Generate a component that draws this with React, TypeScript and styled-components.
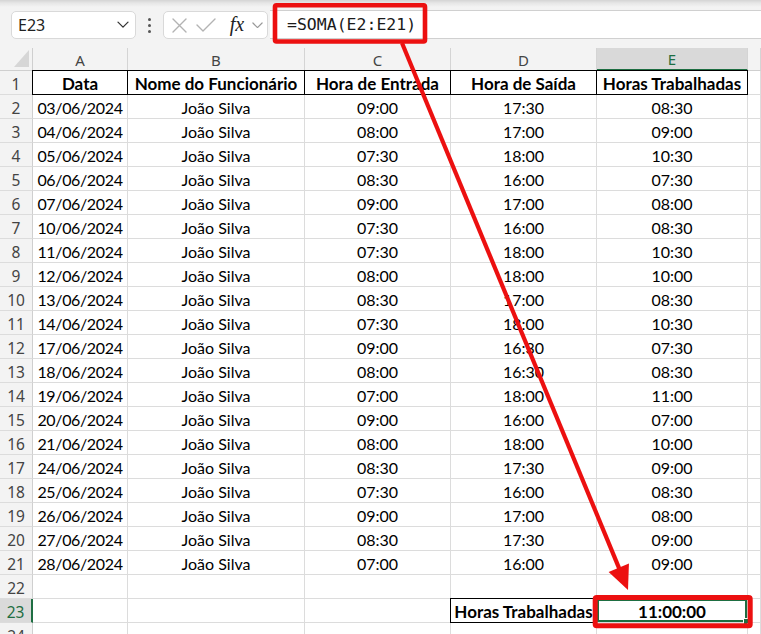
import React from "react";
import styled, { createGlobalStyle, css } from "styled-components";

const GlobalStyle = createGlobalStyle`
  html, body { margin: 0; padding: 0; background: #f3f3f3; overflow: hidden; }
  #root { width: 761px; height: 634px; }
`;

const GREEN = "#1e6e42";
const GRID = "#dcdcdc";
const RED = "#ec1010";

const Page = styled.div`
  position: relative;
  width: 761px;
  height: 634px;
  overflow: hidden;
  background: #f3f3f3;
`;

const Toolbar = styled.div`
  display: flex;
  align-items: flex-start;
  height: 48px;
  box-sizing: border-box;
  padding: 10px 0 0 11px;
  background: linear-gradient(#d4d4d4 0, #e6e6e6 3px, #f3f3f3 7px);
`;

const NameBox = styled.div`
  margin-top: 1px;
  width: 125px;
  height: 28px;
  box-sizing: border-box;
  display: flex;
  align-items: center;
  justify-content: space-between;
  padding: 0 6px 0 6px;
  background: #fff;
  border: 1px solid #d9d9d9;
  border-radius: 5px;
  font: 16px "Noto Sans", sans-serif;
  color: #222;
`;

const Dots = styled.div`
  width: 27px;
  height: 28px;
  margin-top: 1px;
  display: flex;
  flex-direction: column;
  align-items: center;
  justify-content: center;
  gap: 3px;
  & > span {
    width: 3px;
    height: 3px;
    border-radius: 50%;
    background: #555;
  }
`;

const FxBox = styled.div`
  margin-top: 1px;
  width: 105px;
  height: 28px;
  box-sizing: border-box;
  display: flex;
  align-items: center;
  padding-left: 6px;
  background: #fff;
  border: 1px solid #d9d9d9;
  border-radius: 5px;
`;

const IconSlot = styled.div<{ $w: number }>`
  width: ${(p) => p.$w}px;
  display: flex;
  align-items: center;
  justify-content: center;
`;

const FxText = styled.span`
  font: italic 20px "Liberation Serif", serif;
  color: #222;
  width: 26px;
  text-align: center;
  margin-top: -2px;
`;

const FormulaInput = styled.div`
  flex: 1;
  height: 29px;
  margin-left: 2px;
  box-sizing: border-box;
  display: flex;
  align-items: center;
  padding-left: 17px;
  background: #fff;
  border-top: 1px solid #d0d0d0;
  border-bottom: 1px solid #d0d0d0;
  font: 16.5px "DejaVu Sans Mono", monospace;
  color: #1a1a1a;
`;

const Sheet = styled.div`
  display: grid;
  grid-template-columns: 33px 95px 177px 146px 146px 151px 13px;
  grid-template-rows: 23px;
  grid-auto-rows: 24px;
  background: #fff;
`;

const Corner = styled.div`
  background: #f3f3f3;
  border-right: 1px solid #cfcfcf;
  border-bottom: 1px solid #cfcfcf;
  display: flex;
  align-items: flex-end;
  justify-content: flex-end;
  padding: 0 3px 3px 0;
  box-sizing: border-box;
`;

const ColHeader = styled.div<{ $selected?: boolean }>`
  box-sizing: border-box;
  background: ${(p) => (p.$selected ? "#d9d9d9" : "#f3f3f3")};
  border-right: 1px solid #d4d4d4;
  border-bottom: ${(p) => (p.$selected ? `2px solid ${GREEN}` : "1px solid #cfcfcf")};
  display: flex;
  align-items: center;
  justify-content: center;
  padding-top: 1px;
  font: 15px "Noto Sans", sans-serif;
  color: ${(p) => (p.$selected ? GREEN : "#444")};
`;

const RowHeader = styled.div<{ $selected?: boolean }>`
  box-sizing: border-box;
  background: ${(p) => (p.$selected ? "#dadada" : "#f3f3f3")};
  border-right: ${(p) => (p.$selected ? `2px solid ${GREEN}` : "1px solid #cfcfcf")};
  border-bottom: 1px solid #dcdcdc;
  display: flex;
  align-items: center;
  justify-content: center;
  padding-top: 2px;
  font: 15.5px "Noto Sans", sans-serif;
  color: ${(p) => (p.$selected ? GREEN : "#444")};
`;

const Cell = styled.div<{ $bold?: boolean; $boxed?: boolean; $active?: boolean; $tight?: boolean }>`
  position: relative;
  box-sizing: border-box;
  border-right: 1px solid ${GRID};
  border-bottom: 1px solid ${GRID};
  display: flex;
  align-items: center;
  justify-content: center;
  padding-top: 1px;
  white-space: nowrap;
  font: ${(p) => (p.$bold ? "700 17px" : "400 16px")} "Lato", sans-serif;
  letter-spacing: ${(p) => (p.$tight ? "-0.35px" : "0")};
  color: #000;
  ${(p) =>
    p.$boxed &&
    css`
      border-right-color: #000;
      border-bottom-color: #000;
      box-shadow: -1px 0 0 #000, 0 -1px 0 #000, -1px -1px 0 #000;
    `}
  ${(p) =>
    p.$active &&
    css`
      box-shadow: inset 0 0 0 2px ${GREEN};
    `}
`;

const FillHandle = styled.span`
  position: absolute;
  right: -3px;
  bottom: -3px;
  width: 5px;
  height: 5px;
  background: ${GREEN};
  border: 1px solid #fff;
`;

const Annotations = styled.svg`
  position: absolute;
  left: 0;
  top: 0;
  width: 761px;
  height: 634px;
  pointer-events: none;
`;

const rows: [string, string, string, string][] = [
  ["03/06/2024", "09:00", "17:30", "08:30"],
  ["04/06/2024", "08:00", "17:00", "09:00"],
  ["05/06/2024", "07:30", "18:00", "10:30"],
  ["06/06/2024", "08:30", "16:00", "07:30"],
  ["07/06/2024", "09:00", "17:00", "08:00"],
  ["10/06/2024", "07:30", "16:00", "08:30"],
  ["11/06/2024", "07:30", "18:00", "10:30"],
  ["12/06/2024", "08:00", "18:00", "10:00"],
  ["13/06/2024", "08:30", "17:00", "08:30"],
  ["14/06/2024", "07:30", "18:00", "10:30"],
  ["17/06/2024", "09:00", "16:30", "07:30"],
  ["18/06/2024", "08:00", "16:30", "08:30"],
  ["19/06/2024", "07:00", "18:00", "11:00"],
  ["20/06/2024", "09:00", "16:00", "07:00"],
  ["21/06/2024", "08:00", "18:00", "10:00"],
  ["24/06/2024", "08:30", "17:30", "09:00"],
  ["25/06/2024", "07:30", "16:00", "08:30"],
  ["26/06/2024", "09:00", "17:00", "08:00"],
  ["27/06/2024", "08:30", "17:30", "09:00"],
  ["28/06/2024", "07:00", "16:00", "09:00"],
];

const Chevron = ({ w = 12, color = "#444" }: { w?: number; color?: string }) => (
  <svg width={w} height={w * 0.6} viewBox="0 0 12 7" fill="none">
    <polyline points="1,1 6,6 11,1" stroke={color} strokeWidth="1.3" strokeLinecap="round" strokeLinejoin="round" />
  </svg>
);

const columns = ["A", "B", "C", "D", "E", ""];

export default function App() {
  const d = { x: 0.384, y: 0.923 };
  const p = { x: 0.923, y: -0.384 };
  const tip = { x: 628, y: 590 };
  const base = { x: tip.x - 24 * d.x, y: tip.y - 24 * d.y };
  const left = { x: base.x - 11 * p.x, y: base.y - 11 * p.y };
  const right = { x: base.x + 11 * p.x, y: base.y + 11 * p.y };

  return (
    <Page>
      <GlobalStyle />
      <Toolbar>
        <NameBox>
          <span>E23</span>
          <Chevron w={12} color="#333" />
        </NameBox>
        <Dots>
          <span />
          <span />
          <span />
        </Dots>
        <FxBox>
          <IconSlot $w={18}>
            <svg width="15" height="15" viewBox="0 0 15 15">
              <path d="M1 1 L14 14 M14 1 L1 14" stroke="#b3b3b3" strokeWidth="1.4" strokeLinecap="round" />
            </svg>
          </IconSlot>
          <IconSlot $w={36}>
            <svg width="20" height="14" viewBox="0 0 20 14" fill="none">
              <polyline points="1,7 7,13 19,1" stroke="#b3b3b3" strokeWidth="1.4" strokeLinecap="round" strokeLinejoin="round" />
            </svg>
          </IconSlot>
          <FxText>fx</FxText>
          <IconSlot $w={14}>
            <Chevron w={11} color="#999" />
          </IconSlot>
        </FxBox>
        <FormulaInput>=SOMA(E2:E21)</FormulaInput>
      </Toolbar>

      <Sheet>
        <Corner>
          <svg width="15" height="17" viewBox="0 0 15 17">
            <polygon points="15,0 15,17 0,17" fill="#d6d6d6" />
          </svg>
        </Corner>
        {columns.map((c, i) => (
          <ColHeader key={i} $selected={c === "E"}>
            {c}
          </ColHeader>
        ))}

        <RowHeader>1</RowHeader>
        <Cell $bold $boxed>Data</Cell>
        <Cell $bold $boxed>Nome do Funcionário</Cell>
        <Cell $bold $boxed>Hora de Entrada</Cell>
        <Cell $bold $boxed>Hora de Saída</Cell>
        <Cell $bold $boxed>Horas Trabalhadas</Cell>
        <Cell />

        {rows.map((r, i) => (
          <React.Fragment key={i}>
            <RowHeader>{i + 2}</RowHeader>
            <Cell $tight>{r[0]}</Cell>
            <Cell>João Silva</Cell>
            <Cell>{r[1]}</Cell>
            <Cell>{r[2]}</Cell>
            <Cell>{r[3]}</Cell>
            <Cell />
          </React.Fragment>
        ))}

        <RowHeader>22</RowHeader>
        <Cell />
        <Cell />
        <Cell />
        <Cell />
        <Cell />
        <Cell />

        <RowHeader $selected>23</RowHeader>
        <Cell />
        <Cell />
        <Cell />
        <Cell $bold $boxed>Horas Trabalhadas</Cell>
        <Cell $bold $active>
          11:00:00
          <FillHandle />
        </Cell>
        <Cell />

        <RowHeader>24</RowHeader>
        <Cell />
        <Cell />
        <Cell />
        <Cell />
        <Cell />
        <Cell />
      </Sheet>

      <Annotations viewBox="0 0 761 634">
        <rect x="275" y="5.3" width="150" height="36.2" rx="1.5" fill="none" stroke={RED} strokeWidth="4.6" />
        <rect x="595.2" y="597.5" width="155" height="28.3" rx="1.5" fill="none" stroke={RED} strokeWidth="5" />
        <line x1="402" y1="43" x2={base.x + 1} y2={base.y + 2} stroke={RED} strokeWidth="4.2" />
        <polygon
          points={`${tip.x},${tip.y} ${left.x},${left.y} ${right.x},${right.y}`}
          fill={RED}
        />
      </Annotations>
    </Page>
  );
}
